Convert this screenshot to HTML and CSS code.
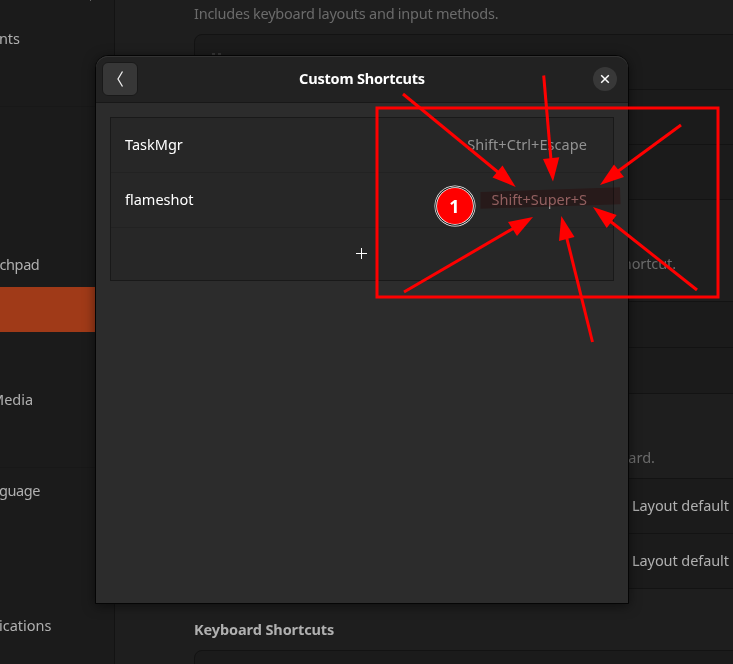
FILE: index.html
```html
<!DOCTYPE html>
<html lang="en">
<head>
<meta charset="utf-8">
<title>Custom Shortcuts</title>
<link rel="stylesheet" href="styles.css">
</head>
<body>
<div class="settings">
  <nav class="sidebar">
    <div class="item item-first"><svg width="2" height="1" viewBox="0 0 2 1"><path d="M0 .5h1"/></svg></div>
    <div class="item"><span class="t-unts">nts</span></div>
    <div class="item"></div>
    <div class="sep"></div>
    <div class="item"></div>
    <div class="item"></div>
    <div class="item"></div>
    <div class="item"><span class="t-pad">chpad</span></div>
    <div class="item selected"></div>
    <div class="item"></div>
    <div class="item"><span class="t-media">Media</span></div>
    <div class="item"></div>
    <div class="sep"></div>
    <div class="item"><span class="t-guage">guage</span></div>
    <div class="item"></div>
    <div class="item"></div>
    <div class="item"><span class="t-cations">ications</span></div>
    <div class="item"></div>
  </nav>
  <main class="content">
    <p class="hint hint-sources"><span class="t-includes">Includes keyboard layouts and input methods.</span></p>
    <section class="card card-sources">
      <div class="row"><svg class="grip" width="9" height="2" viewBox="0 0 9 2"><path d="M0 1h3M6 1h3"/></svg></div>
      <div class="row"></div>
      <div class="row"></div>
    </section>
    <p class="hint hint-switch"><span class="t-shortcut">shortcut.</span></p>
    <section class="card card-switch">
      <div class="row short"></div>
      <div class="row short"></div>
    </section>
    <p class="hint hint-special"><span class="t-board">board.</span></p>
    <section class="card card-special">
      <div class="row"><span class="t-layout">Layout default</span></div>
      <div class="row"><span class="t-layout">Layout default</span></div>
    </section>
    <h2 class="heading"><span class="t-heading">Keyboard Shortcuts</span></h2>
    <section class="card card-last"><div class="row"></div></section>
  </main>
</div>

<div class="dialog">
  <header class="titlebar">
    <button class="back" aria-label="Back"><svg width="8" height="18" viewBox="0 0 8 18"><path d="M6.5 1.500L2 9l4.500 7.500"/></svg></button>
    <h1><span class="t-title">Custom Shortcuts</span></h1>
    <button class="close" aria-label="Close"><svg width="10" height="10" viewBox="0 0 10 10"><path d="M1.200 1.200l7.600 7.600M8.800 1.200l-7.600 7.600"/></svg></button>
  </header>
  <div class="list">
    <div class="entry"><span class="t-task">TaskMgr</span><span class="keys t-esc">Shift+Ctrl+Escape</span></div>
    <div class="entry"><span class="t-flame">flameshot</span><span class="keys t-super">Shift+Super+S</span></div>
    <div class="entry add"><svg width="11" height="11" viewBox="0 0 11 11"><path d="M5.5 0v11M0 5.5h11"/></svg></div>
  </div>
</div>

<svg class="marker" width="733" height="664" viewBox="0 0 733 664"><path d="M480.5 192L620 187.3L620.6 204.3L480.5 208.8z"/></svg>
<svg class="notes" width="733" height="664" viewBox="0 0 733 664">
  <g class="lines">
    <rect x="377" y="108" width="341" height="189"/>
    <path d="M403 94L499 173"/>
    <path d="M543.7 75.5L551 160"/>
    <path d="M681 125L617 172"/>
    <path d="M697 290L610 221"/>
    <path d="M592.5 342L566.5 237"/>
    <path d="M404 292L514 228"/>
  </g>
  <g class="heads">
    <path d="M515.7 186.9L502.5 165.5L492.5 177.5z"/>
    <path d="M553 181.5L543 159L559.3 157.3z"/>
    <path d="M600 185L614 164.5L624 177z"/>
    <path d="M593 207L616.7 215L606.7 228z"/>
    <path d="M561.3 216L559 241L574.5 237z"/>
    <path d="M533 217L508 222L517 236z"/>
  </g>
  <g class="badge">
    <circle class="ring-light" cx="455" cy="206" r="20.5"/>
    <circle class="ring-dark" cx="455" cy="206" r="19.8"/>
    <circle class="ring-light" cx="455" cy="206" r="18.8"/>
    <circle class="disc" cx="455" cy="206" r="18"/>
    <text x="454.5" y="212.5" text-anchor="middle">1</text>
  </g>
</svg>
</body>
</html>
```
FILE: styles.css
```css
* { box-sizing: border-box; }
body { margin: 0; width: 733px; height: 664px; overflow: hidden; position: relative; background: #1e1e1e; color: #b0b0b0; font: 14.5px/20px "Noto Sans", "Open Sans", sans-serif; }
h1, h2, p { margin: 0; font-size: inherit; }
span { white-space: nowrap; }
button { border: 0; padding: 0; display: flex; align-items: center; justify-content: center; }
svg { fill: none; display: block; }

.settings { display: flex; height: 664px; overflow: hidden; }
.sidebar { width: 115px; flex: none; background: #1b1b1b; border-right: 1px solid #131313; overflow: hidden; }
.item { height: 45px; display: flex; align-items: center; padding-bottom: 2px; }
.item-first { height: 16px; align-items: flex-start; padding: 0 0 0 90px; }
.item-first svg { stroke: #666; }
.sep { height: 1px; background: #181818; }
.selected { background: #a03a18; }
.t-unts { margin-left: -1px; letter-spacing: -.1px; }
.t-pad { margin-left: -.5px; letter-spacing: -.4px; }
.t-media { margin-left: -9px; }
.t-guage { margin-left: -1px; letter-spacing: -.4px; }
.t-cations { margin-left: -1px; }

.content { flex: 1; padding-left: 79px; overflow: hidden; }
.hint { color: #6b6b6b; display: flex; }
.hint-sources { height: 34px; padding-top: 3px; }
.hint-switch { height: 101px; padding: 53px 57px 0 0; justify-content: flex-end; }
.hint-special { height: 84px; padding: 53px 78px 0 0; justify-content: flex-end; }
.t-includes { letter-spacing: -.25px; }
.t-shortcut { letter-spacing: -.1px; }
.card { width: 620px; border: 1px solid #131313; border-radius: 8px; background: #1b1b1b; }
.row { height: 55px; display: flex; align-items: center; padding-bottom: 2px; border-bottom: 1px solid #131313; }
.row:last-child { border-bottom: 0; height: 54px; }
.row.short { height: 46px; }
.row.short:last-child { height: 45px; }
.card-special .row { padding-left: 437px; }
.t-layout { letter-spacing: -.08px; }
.grip { margin: -14px 0 0 17px; stroke: #555; }
.heading { height: 61px; padding-top: 30px; font-weight: 700; letter-spacing: -.1px; }

.dialog { position: absolute; left: 95px; top: 55px; width: 534px; height: 549px; border: 1px solid #050505; border-radius: 13px 13px 0 0; background: #2c2c2c; box-shadow: 0 2px 12px rgba(0,0,0,.5); color: #fff; }
.titlebar { height: 47px; display: flex; align-items: center; justify-content: space-between; padding: 0 11px 0 6px; background: #222; border-bottom: 1px solid #181818; box-shadow: inset 0 1px #333; border-radius: 12px 12px 0 0; }
.titlebar h1 { font-weight: 700; letter-spacing: -.2px; padding: 0 7px 2px 0; }
.back { width: 36px; height: 34px; background: #373737; border: 1px solid #191919; border-radius: 6px; }
.back svg { stroke: #eee; stroke-width: 1.3; }
.close { width: 24px; height: 24px; border-radius: 50%; background: #383838; }
.close svg { stroke: #fff; stroke-width: 1.5; }
.list { margin: 14px; height: 164px; border: 1px solid #191919; background: #272727; }
.entry { height: 55px; display: flex; align-items: center; justify-content: space-between; padding: 0 26px 2px 14px; border-bottom: 1px solid #222; }
.entry.add { height: 52px; border: 0; justify-content: center; padding: 0 2px 2px 0; }
.add svg { stroke: #fff; }
.keys { color: #929292; }
.t-esc { letter-spacing: .06px; }

.marker, .notes { position: absolute; left: 0; top: 0; pointer-events: none; }
.marker { mix-blend-mode: multiply; fill: #ffa6a6; }
.lines { stroke: #f00; stroke-width: 3; }
.heads, .disc { fill: #f00; }
.ring-light { fill: #fff; }
.ring-dark { fill: #111; }
.badge text { fill: #fff; font: 700 18px "Noto Sans", sans-serif; }
```
